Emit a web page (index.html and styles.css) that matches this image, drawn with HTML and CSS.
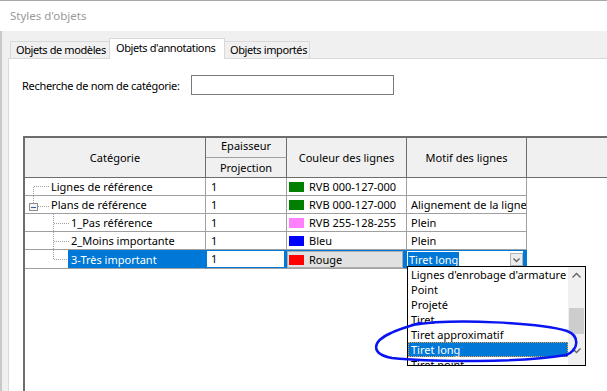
FILE: index.html
```html
<!DOCTYPE html>
<html lang="fr">
<head>
    <meta charset="UTF-8">
    <meta name="viewport" content="width=device-width, initial-scale=1.0">
    <title>Styles d'objets</title>
    <link rel="stylesheet" href="styles.css">
</head>
<body>
    <div class="titlebar">Styles d'objets</div>

    <div class="dialog">
        <div class="tabs">
            <div class="tab tab-models">Objets de modèles</div>
            <div class="tab tab-annot active">Objets d'annotations</div>
            <div class="tab tab-import">Objets importés</div>
        </div>

        <div class="panel">
            <div class="search">
                <label for="search">Recherche de nom de catégorie:</label>
                <input type="text" id="search">
            </div>

            <div class="grid">
                <div class="grid-head">
                    <div class="hcell h-cat">Catégorie</div>
                    <div class="hcell h-thick"><span>Epaisseur des lignes</span></div>
                    <div class="hcell h-proj">Projection</div>
                    <div class="hcell h-color">Couleur des lignes</div>
                    <div class="hcell h-pattern">Motif des lignes</div>
                    <div class="hcell h-empty"></div>
                </div>

                <!-- Lignes de référence -->
                <div class="row">
                    <div class="cell cat">
                        <svg class="guide" width="26" height="17">
                            <line x1="9" y1="8.5" x2="25" y2="8.5" />
                            <line x1="8.5" y1="9" x2="8.5" y2="17" />
                        </svg>
                        <span class="name">Lignes de référence</span>
                    </div>
                    <div class="cell num">1</div>
                    <div class="cell color"><i class="swatch green"></i>RVB 000-127-000</div>
                    <div class="cell pattern"></div>
                </div>

                <!-- Plans de référence -->
                <div class="row">
                    <div class="cell cat">
                        <svg class="guide" width="26" height="17">
                            <line x1="8.5" y1="0" x2="8.5" y2="7" />
                            <line x1="13" y1="10.5" x2="25" y2="10.5" />
                            <rect class="box" x="4.5" y="7.5" width="8" height="7" />
                            <line class="minus" x1="6" y1="11" x2="11" y2="11" />
                        </svg>
                        <span class="name">Plans de référence</span>
                    </div>
                    <div class="cell num">1</div>
                    <div class="cell color"><i class="swatch green"></i>RVB 000-127-000</div>
                    <div class="cell pattern">Alignement de la ligne</div>
                </div>

                <div class="row">
                    <div class="cell cat">
                        <svg class="guide" width="46" height="17">
                            <line x1="28.5" y1="0" x2="28.5" y2="17" />
                            <line x1="29" y1="9.5" x2="45" y2="9.5" />
                        </svg>
                        <span class="name">1_Pas référence</span>
                    </div>
                    <div class="cell num">1</div>
                    <div class="cell color"><i class="swatch pink"></i>RVB 255-128-255</div>
                    <div class="cell pattern">Plein</div>
                </div>

                <div class="row">
                    <div class="cell cat">
                        <svg class="guide" width="46" height="17">
                            <line x1="28.5" y1="0" x2="28.5" y2="17" />
                            <line x1="29" y1="9.5" x2="45" y2="9.5" />
                        </svg>
                        <span class="name">2_Moins importante</span>
                    </div>
                    <div class="cell num">1</div>
                    <div class="cell color"><i class="swatch blue"></i>Bleu</div>
                    <div class="cell pattern">Plein</div>
                </div>

                <!-- ligne en cours d'édition -->
                <div class="row sel">
                    <div class="cell cat">
                        <svg class="guide" width="43" height="17">
                            <line x1="28.5" y1="0" x2="28.5" y2="10" />
                            <line x1="29" y1="9.5" x2="43" y2="9.5" />
                        </svg>
                        <span class="name">3-Très important</span>
                    </div>
                    <div class="cell num">
                        <div class="edit-num">1</div>
                    </div>
                    <div class="cell color">
                        <div class="edit-color"><i class="swatch red"></i>Rouge</div>
                    </div>
                    <div class="cell pattern">
                        <div class="edit-pattern">
                            <span class="picked">Tiret long</span>
                            <span class="drop-btn">
                                <svg width="11" height="11"><polyline points="2.5,4.5 5.5,7.5 8.5,4.5" /></svg>
                            </span>
                        </div>

                        <div class="dropdown">
                            <ul class="options">
                                <li>Lignes d'enrobage d'armature</li>
                                <li>Point</li>
                                <li>Projeté</li>
                                <li>Tiret</li>
                                <li>Tiret approximatif</li>
                                <li class="current">Tiret long</li>
                                <li>Tiret point</li>
                            </ul>
                            <div class="scrollbar">
                                <svg class="arrow" width="17" height="17"><polyline points="4.5,10.5 8.5,6.5 12.5,10.5" /></svg>
                                <div class="thumb"></div>
                                <svg class="arrow arrow-down" width="17" height="17"><polyline points="4.5,6.5 8.5,10.5 12.5,6.5" /></svg>
                            </div>
                        </div>
                    </div>
                </div>
            </div>
        </div>
    </div>

    <!-- trait au feutre ajouté sur la capture -->
    <svg class="annotation" width="607" height="391">
        <path d="M 412 325 C 455 318, 540 323, 567 331 C 580 336, 579 350, 566 355 C 520 363, 430 362, 392 358 C 371 354, 371 342, 391 333 C 399 329, 406 327, 420 323" />
    </svg>
</body>
</html>
```

FILE: styles.css
```css
* {
    box-sizing: border-box;
    margin: 0;
    padding: 0;
}

body {
    position: relative;
    width: 607px;
    height: 391px;
    overflow: hidden;
    font-family: "Noto Sans", "Open Sans", sans-serif;
    font-size: 11px;
    color: #000;
    background: #fff;
}

.titlebar {
    height: 31px;
    padding-left: 10px;
    line-height: 30px;
    font-size: 11.5px;
    border-top: 1px solid #a8a8a8;
    color: #999;
    background: #fff;
}

.dialog {
    display: flex;
    flex-direction: column;
    height: 360px;
    background: #f0f0f0;
    border-left: 2px solid #c9c9c9;
}

/* onglets */
.tabs {
    display: flex;
    align-items: flex-end;
    height: 27px;
    padding-left: 8px;
}

.tab {
    height: 17px;
    line-height: 15px;
    padding-left: 5px;
    border: 1px solid #d9d9d9;
    border-bottom: none;
    background: #f0f0f0;
    letter-spacing: -0.4px;
    white-space: nowrap;
    overflow: hidden;
}

.tab-models {
    width: 100px;
}

.tab-annot {
    width: 116px;
    margin-left: -1px;
    padding-left: 6px;
}

.tab-import {
    width: 86px;
    margin-left: -1px;
}

.tab.active {
    position: relative;
    z-index: 1;
    height: 21px;
    margin-bottom: -1px;
    line-height: 18px;
    background: #fff;
}

.panel {
    flex: 1;
    display: flex;
    flex-direction: column;
    margin-left: 6px;
    background: #fff;
    border-top: 1px solid #d9d9d9;
    border-left: 1px solid #dadada;
}

.search {
    display: flex;
    align-items: center;
    margin-top: 16px;
    padding-left: 13px;
}

.search label {
    width: 169px;
    letter-spacing: -0.3px;
    white-space: nowrap;
}

.search input {
    width: 203px;
    height: 20px;
    border: 1px solid #7a7a7a;
    outline: none;
}

/* grille */
.grid {
    flex: 1;
    margin-top: 41px;
    margin-left: 14px;
    border-top: 2px solid #6d6d6d;
    border-left: 2px solid #6d6d6d;
}

.grid-head {
    display: grid;
    grid-template-columns: 181px 81px 120px 120px 1fr;
    grid-template-rows: 20px 20px;
    grid-template-areas:
        "cat thick color pattern empty"
        "cat proj color pattern empty";
    background: #f0f0f0;
}

.hcell {
    display: flex;
    align-items: center;
    justify-content: center;
    border-right: 1px solid #6d6d6d;
    border-bottom: 1px solid #6d6d6d;
    white-space: nowrap;
}

.h-cat { grid-area: cat; }
.h-thick { grid-area: thick; }
.h-proj { grid-area: proj; }
.h-color { grid-area: color; }
.h-pattern { grid-area: pattern; }
.h-empty { grid-area: empty; border-right: none; }

.h-thick {
    align-items: flex-start;
    overflow: hidden;
    line-height: 15px;
    white-space: normal;
    text-align: center;
    border-bottom-color: #a0a0a0;
}

.h-thick span {
    width: 60px;
}

.row {
    display: grid;
    grid-template-columns: 181px 81px 120px 120px;
    height: 18px;
}

.cell {
    display: flex;
    align-items: center;
    border-right: 1px solid #a0a0a0;
    border-bottom: 1px solid #a0a0a0;
    white-space: nowrap;
    overflow: hidden;
}

.cat {
    align-items: stretch;
}

.cat .name {
    display: flex;
    align-items: center;
}

.guide {
    flex: none;
    shape-rendering: crispEdges;
}

.guide line {
    stroke: #a0a0a0;
    stroke-width: 1;
    stroke-dasharray: 1 1;
}

.guide .box {
    fill: #f4f4f4;
    stroke: #8e8e8e;
}

.guide .minus {
    stroke: #3b5ba5;
    stroke-dasharray: none;
}

.num {
    padding-left: 5px;
}

.color {
    padding-left: 2px;
}

.pattern {
    padding-left: 4px;
}

.swatch {
    display: inline-block;
    flex: none;
    width: 15px;
    height: 10px;
    margin-right: 5px;
}

.swatch.green { background: #007f00; }
.swatch.pink { background: #ff80ff; }
.swatch.blue { background: #0000ff; }
.swatch.red { background: #ff0000; }

/* ligne sélectionnée */
.row.sel .cell {
    border-right-color: #0078d7;
    background: #0078d7;
    overflow: visible;
}

.row.sel .cell.cat {
    background: #fff;
}

.row.sel .name {
    flex: 1;
    padding-left: 3px;
    color: #fff;
    background: #0078d7;
}

.row.sel .num,
.row.sel .color,
.row.sel .pattern {
    align-items: stretch;
    padding: 0;
}

.edit-num {
    flex: 1;
    margin: 1px 2px 1px 1px;
    padding-left: 4px;
    line-height: 15px;
    background: #fff;
}

.edit-color {
    display: flex;
    align-items: center;
    flex: 1;
    margin: 1px 3px 0 0;
    padding-left: 1px;
    border: 1px solid #adadad;
    background: #e1e1e1;
}

.row.sel .pattern {
    position: relative;
}

.edit-pattern {
    display: flex;
    align-items: center;
    justify-content: space-between;
    flex: 1;
    margin: 1px 3px 1px 0;
    padding-left: 1px;
    background: #fff;
}

.picked {
    padding: 0 1px;
    line-height: 15px;
    color: #fff;
    background: #0078d7;
}

.drop-btn {
    display: flex;
    width: 13px;
    height: 13px;
    align-items: center;
    justify-content: center;
    border: 1px solid #b4b4b4;
    background: #ececec;
}

.drop-btn polyline,
.arrow polyline {
    fill: none;
    stroke: #606060;
    stroke-width: 1.3;
}

/* liste déroulante */
.dropdown {
    position: absolute;
    z-index: 2;
    top: 16px;
    left: 0;
    display: flex;
    width: 179px;
    height: 100px;
    border: 1px solid #000;
    background: #fff;
    overflow: hidden;
}

.options {
    flex: 1;
    list-style: none;
}

.options li {
    height: 15px;
    padding-left: 3px;
    line-height: 15px;
    white-space: nowrap;
}

.options li.current {
    color: #fff;
    background: #0078d7;
    outline: 1px dotted #f0a040;
    outline-offset: -1px;
}

.scrollbar {
    display: flex;
    flex-direction: column;
    flex: none;
    width: 17px;
    background: #f0f0f0;
}

.thumb {
    height: 26px;
    margin: 24px 1px 0 1px;
    background: #cdcdcd;
}

.arrow-down {
    margin-top: auto;
    margin-bottom: 6px;
}

.annotation {
    position: absolute;
    z-index: 5;
    top: 0;
    left: 0;
    pointer-events: none;
}

.annotation path {
    fill: none;
    stroke: #0a14f0;
    stroke-width: 2.5;
    stroke-linecap: round;
}
```
